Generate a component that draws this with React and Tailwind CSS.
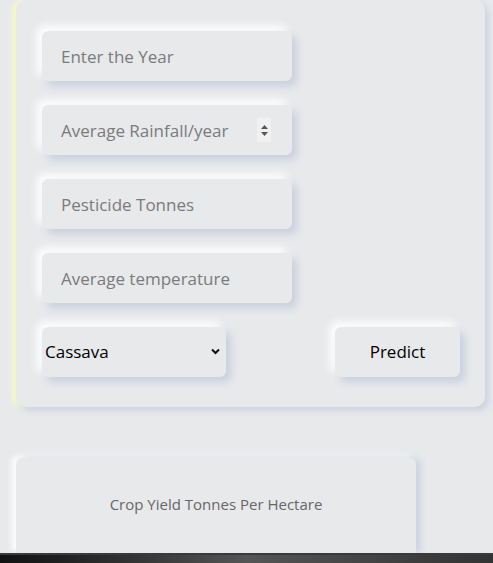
import React from 'react';

const fieldShadow = 'shadow-[5px_5px_8px_#c8cfdd,-5px_-5px_8px_#ffffff]';

const Field = ({ placeholder, spinner }) => (
  <div className={`flex items-center w-[250px] h-[50px] rounded-md bg-[#e8e9eb] ${fieldShadow}`}>
    <input
      type="text"
      placeholder={placeholder}
      className="flex-1 min-w-0 h-full bg-transparent pl-[19px] text-[17px] text-[#333] placeholder:text-[#7b7b7b] outline-none"
    />
    {spinner && (
      <div className="flex flex-col items-center justify-center gap-[3px] w-[14px] h-[24px] mr-[21px] bg-[#f1f1f2]">
        <svg width="7" height="4" viewBox="0 0 7 4"><path d="M3.5 0L7 4H0z" fill="#555" /></svg>
        <svg width="7" height="4" viewBox="0 0 7 4"><path d="M0 0h7L3.5 4z" fill="#555" /></svg>
      </div>
    )}
  </div>
);

export default function App() {
  return (
    <div className="h-[563px] overflow-hidden bg-[#e8e9eb] flex flex-col" style={{ fontFamily: '"Open Sans", "Liberation Sans", sans-serif' }}>
      <div className="ml-4 w-[469px] h-[407px] shrink-0 rounded-[10px] bg-[#e8e9eb] shadow-[4px_4px_6px_#cdd4e2,-4px_0_4px_#f6f8c8] pt-[31px] pl-[26px] pr-[25px]">
        <div className="flex flex-col gap-6">
          <Field placeholder="Enter the Year" />
          <Field placeholder="Average Rainfall/year" spinner />
          <Field placeholder="Pesticide Tonnes" />
          <Field placeholder="Average temperature" />
          <div className="flex items-center justify-between">
            <div className="relative">
              <select
                defaultValue="Cassava"
                className={`appearance-none w-[184px] h-[50px] rounded-md bg-[#e8e9eb] pl-[3px] text-[17px] text-black outline-none ${fieldShadow}`}
              >
                <option>Cassava</option>
                <option>Maize</option>
                <option>Potatoes</option>
                <option>Rice, paddy</option>
                <option>Sorghum</option>
                <option>Soybeans</option>
                <option>Wheat</option>
              </select>
              <svg className="absolute right-[6px] top-[21px] pointer-events-none" width="9" height="7" viewBox="0 0 9 7">
                <path d="M1 1.5l3.5 3.5L8 1.5" fill="none" stroke="#111" strokeWidth="2" />
              </svg>
            </div>
            <button className={`w-[125px] h-[50px] rounded-md bg-[#e8e9eb] text-[17px] text-black ${fieldShadow}`}>
              Predict
            </button>
          </div>
        </div>
      </div>
      <div className="ml-4 mt-[51px] w-[400px] h-[95px] shrink-0 rounded-t-md bg-[#e8e9eb] shadow-[5px_0_6px_#cdd4e2,-4px_-2px_6px_#ffffff] flex justify-center pt-[35px]">
        <span className="text-[15px] text-[#666]">Crop Yield Tonnes Per Hectare</span>
      </div>
      <div className="h-[10px] shrink-0 border-t-2 border-[#3a3a3a] bg-gradient-to-r from-[#111] via-[#555] to-[#333]" />
    </div>
  );
}
